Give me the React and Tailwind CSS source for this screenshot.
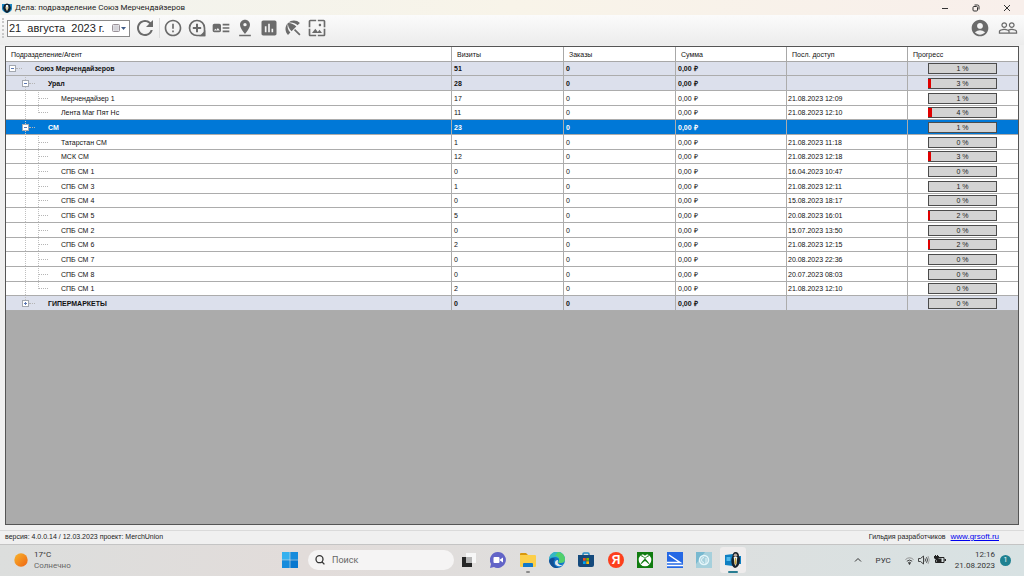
import { useState } from 'react';
import {
  MdAccountCircle,
  MdArtTrack,
  MdAssessment,
  MdBeachAccess,
  MdErrorOutline,
  MdPeopleOutline,
  MdPinDrop,
  MdRefresh,
  MdWallpaper,
} from 'react-icons/md';

const rows = [
  { level: 0, name: 'Союз Мерчендайзеров', visits: 51, date: '', progress: 1 },
  { level: 1, name: 'Урал', visits: 28, date: '', progress: 3 },
  { level: 2, name: 'Мерчендайзер 1', visits: 17, date: '21.08.2023 12:09', progress: 1 },
  { level: 2, name: 'Лента Маг Пят Нс', visits: 11, date: '21.08.2023 12:10', progress: 4, last: true },
  { level: 1, name: 'СМ', visits: 23, date: '', progress: 1 },
  { level: 2, name: 'Татарстан СМ', visits: 1, date: '21.08.2023 11:18', progress: 0 },
  { level: 2, name: 'МСК СМ', visits: 12, date: '21.08.2023 12:18', progress: 3 },
  { level: 2, name: 'СПБ СМ 1', visits: 0, date: '16.04.2023 10:47', progress: 0 },
  { level: 2, name: 'СПБ СМ 3', visits: 1, date: '21.08.2023 12:11', progress: 1 },
  { level: 2, name: 'СПБ СМ 4', visits: 0, date: '15.08.2023 18:17', progress: 0 },
  { level: 2, name: 'СПБ СМ 5', visits: 5, date: '20.08.2023 16:01', progress: 2 },
  { level: 2, name: 'СПБ СМ 2', visits: 0, date: '15.07.2023 13:50', progress: 0 },
  { level: 2, name: 'СПБ СМ 6', visits: 2, date: '21.08.2023 12:15', progress: 2 },
  { level: 2, name: 'СПБ СМ 7', visits: 0, date: '20.08.2023 22:36', progress: 0 },
  { level: 2, name: 'СПБ СМ 8', visits: 0, date: '20.07.2023 08:03', progress: 0 },
  { level: 2, name: 'СПБ СМ 1', visits: 2, date: '21.08.2023 12:10', progress: 0, last: true },
  { level: 1, name: 'ГИПЕРМАРКЕТЫ', visits: 0, date: '', progress: 0, closed: true, last: true },
];

function ShieldLogo() {
  return (
    <svg viewBox="0 0 10 10" className="size-[10px]" aria-hidden="true">
      <path d="M0 1h10v5q-1 3-5 4-4-1-5-4z" fill="#1b87c4" />
      <path d="M2 2q3-3 6 0l1 3q-1 4-4 5-3-1-4-5z" fill="#10222f" />
      <path d="M4 2h2l.5 3L5 8 3.500 5z" fill="#f1f1ec" />
      <path d="M4.600 4h.8v3h-.8z" fill="#c9a538" />
    </svg>
  );
}

function AgentLogo() {
  return (
    <svg viewBox="0 0 16 16" className="size-4" aria-hidden="true">
      <path d="M0 3l8-1v12l-8-1z" fill="#0f7fc2" />
      <path d="M1.500 5h4v4h-4z" fill="#4fb9ec" />
      <path d="M13 4h3v8h-3z" fill="#0f7fc2" />
      <path d="M10.500 0c2.500 0 3.500 2 3.500 4l1 2c0 5-1 9-5 10-3-1-4-5-3.500-9L7.500 4c0-2 1-4 3-4z" fill="#18222b" />
      <path d="M8.700 5h3.600l-.8 7-1 2-1-2z" fill="#eef3f5" />
      <path d="M10 6h1l.5 5-1 2-1-2z" fill="#c9a538" />
      <circle cx="10.500" cy="3.200" r="1.700" fill="#b9aaa0" />
    </svg>
  );
}

function TitleBar() {
  return (
    <header className="flex h-[15px] items-center bg-linear-to-r from-[#f1f3ee] via-[#f8f4e9] to-[#f8efeb] pr-px pl-[2px] font-['Roboto',sans-serif]">
      <ShieldLogo />
      <h1 className="ml-[3px] flex-1 text-[8px] leading-[12px] text-[#222]">
        Дела: подразделение Союз Мерчендайзеров
      </h1>
      <div className="flex text-[#333]">
        <button aria-label="Свернуть" className="flex h-[15px] w-[31px] items-center justify-center">
          <svg viewBox="0 0 8 8" className="size-2" fill="none" stroke="currentColor">
            <path d="M1 4.500h6" />
          </svg>
        </button>
        <button aria-label="Восстановить" className="flex h-[15px] w-[31px] items-center justify-center">
          <svg viewBox="0 0 8 8" className="size-2" fill="none" stroke="currentColor">
            <rect x="1" y="2.500" width="4.500" height="4.500" rx="1" />
            <path d="M2.500 1h3A1.500 1.500 0 0 1 7 2.500v3" />
          </svg>
        </button>
        <button aria-label="Закрыть" className="flex h-[15px] w-[32px] items-center justify-center">
          <svg viewBox="0 0 8 8" className="size-2" fill="none" stroke="currentColor">
            <path d="M1 1l6 6M7 1L1 7" />
          </svg>
        </button>
      </div>
    </header>
  );
}

function AddBubble() {
  return (
    <svg viewBox="0 0 24 24" className="size-5" fill="none" stroke="currentColor" strokeWidth="2">
      <path d="M12 3a9 9 0 1 0 0 18h9v-9a9 9 0 0 0-9-9z" />
      <path d="M12 7v10M7 12h10" strokeWidth="2.400" />
      <path d="M17 21l4-4v4z" fill="currentColor" />
    </svg>
  );
}

const tools = [
  { label: 'Задачи', icon: <MdErrorOutline className="size-5" /> },
  { label: 'Добавить', icon: <AddBubble /> },
  { label: 'Фотоотчёт', icon: <MdArtTrack className="size-5" /> },
  { label: 'На карте', icon: <MdPinDrop className="size-5" /> },
  { label: 'Отчёты', icon: <MdAssessment className="size-5" /> },
  { label: 'Отпуск', icon: <MdBeachAccess className="size-5" /> },
  { label: 'Галерея', icon: <MdWallpaper className="size-5" /> },
];

function Toolbar() {
  const [date, setDate] = useState('21  августа  2023 г.');

  return (
    <div className="flex h-[30px] items-center bg-linear-to-b from-[#fbfbfb] to-[#ececec] pb-1 text-[#6b6b6b]">
      <span className="ml-[2px] h-5 border-l-2 border-dotted border-[#c8c8c8]" />
      <div className="ml-[3px] flex h-[17px] w-[123px] items-center border border-[#8a8a8a] bg-white pl-px">
        <input
          aria-label="Дата"
          value={date}
          onChange={(e) => setDate(e.target.value)}
          className="min-w-0 flex-1 bg-transparent text-[11px] leading-[14px] whitespace-pre text-[#222] outline-none"
        />
        <button aria-label="Открыть календарь" className="mr-[3px] flex items-center gap-px">
          <svg viewBox="0 0 8 8" className="size-2">
            <rect x=".5" y=".5" width="7" height="7" rx="1" fill="#e6e6ea" stroke="#9a9298" />
            <path d="M1 3h6M1 5h6M3 1v6M5 1v6" stroke="#bdb9c2" strokeWidth=".5" />
          </svg>
          <svg viewBox="0 0 5 3" className="h-[3px] w-[5px]">
            <path d="M0 0h5L2.500 3z" fill="#3d5a86" />
          </svg>
        </button>
      </div>
      <button aria-label="Обновить" className="ml-[3px]">
        <MdRefresh className="size-6" />
      </button>
      <span className="ml-[2px] h-5 border-l border-[#dcdcdc]" />
      <div className="ml-[3px] flex flex-1 gap-1">
        {tools.map((t) => (
          <button key={t.label} aria-label={t.label}>
            {t.icon}
          </button>
        ))}
      </div>
      <div className="mr-[6px] flex gap-2">
        <button aria-label="Профиль">
          <MdAccountCircle className="size-5" />
        </button>
        <button aria-label="Команда">
          <MdPeopleOutline className="size-5" />
        </button>
      </div>
    </div>
  );
}

function Toggle({ closed, root, last }) {
  return (
    <span className="ml-[3px] flex w-[7px] flex-col items-center">
      <span className={root ? 'flex-1' : 'flex-1 border-l border-dotted border-[#c0c0c0]'} />
      <button aria-label={closed ? 'Развернуть' : 'Свернуть ветку'} className="size-[7px]">
        <svg viewBox="0 0 7 7" className="block size-[7px]">
          <rect x=".5" y=".5" width="6" height="6" fill="#fff" stroke="#a3a8b0" />
          <path d={closed ? 'M2 3.500h3M3.500 2v3' : 'M2 3.500h3'} stroke="#5c78b4" />
        </svg>
      </button>
      <span className={root || last ? 'flex-1' : 'flex-1 border-l border-dotted border-[#c0c0c0]'} />
    </span>
  );
}

function NameCell({ row }) {
  return (
    <div className="flex h-[13px] items-stretch">
      {row.level > 0 && <span className="w-[13px]" />}
      {row.level < 2 ? (
        <>
          <Toggle closed={row.closed} root={row.level === 0} last={row.last} />
          <span className="w-[6px] self-center border-t border-dotted border-[#b5b5b5]" />
        </>
      ) : (
        <>
          <span className="ml-[6px] w-[7px] border-l border-dotted border-[#c0c0c0]" />
          <span
            className={
              row.last
                ? 'ml-[6px] h-[7px] border-l border-dotted border-[#c0c0c0]'
                : 'ml-[6px] border-l border-dotted border-[#c0c0c0]'
            }
          />
          <span className="w-[9px] self-center border-t border-dotted border-[#b5b5b5]" />
        </>
      )}
      <span className="ml-[13px] leading-[13px]">{row.name}</span>
    </div>
  );
}

function ProgressBar({ value }) {
  return (
    <div
      role="progressbar"
      aria-valuenow={value}
      aria-label="Прогресс"
      className="relative ml-[20px] h-[11px] w-[69px] border border-[#4c4c4c] bg-[#d3d3d3] text-center leading-[9px] font-normal text-[#222]"
    >
      {value > 1 && (
        <span
          className="absolute inset-y-0 -left-px bg-[#e00000]"
          style={{ width: value }}
        />
      )}
      {value} %
    </div>
  );
}

function AgentTable() {
  const [selected, setSelected] = useState(4);

  return (
    <table className="w-full table-fixed border-separate border-spacing-0 text-left text-[7px] leading-[13px] text-[#111]">
      <colgroup>
        <col />
        <col className="w-[112px]" />
        <col className="w-[112px]" />
        <col className="w-[111px]" />
        <col className="w-[121px]" />
        <col className="w-[111px]" />
      </colgroup>
      <thead>
        <tr className="h-[15px] bg-white *:border-b *:border-[#a8a8a8] *:p-0 *:pl-[5px] *:font-normal">
          <th>Подразделение/Агент</th>
          <th className="border-l border-l-[#e2e2e2]">Визиты</th>
          <th className="border-l border-l-[#e2e2e2]">Заказы</th>
          <th className="border-l border-l-[#e2e2e2]">Сумма</th>
          <th className="border-l border-l-[#e2e2e2]">Посл. доступ</th>
          <th className="border-l border-l-[#e2e2e2]">Прогресс</th>
        </tr>
      </thead>
      <tbody>
        {rows.map((row, i) => {
          let tone = 'bg-white';
          if (row.level < 2) tone = 'bg-[#dce0ec] font-bold';
          if (i === selected) tone = 'bg-[#0078d7] text-white' + (row.level < 2 ? ' font-bold' : '');

          return (
            <tr
              key={i}
              onClick={() => setSelected(i)}
              className={`h-[15px] nth-[3n+1]:h-[14px] *:border-b *:border-[#acacac] *:p-0 ${tone}`}
            >
              <td>
                <NameCell row={row} />
              </td>
              <td className="border-l pl-[2px]!">{row.visits}</td>
              <td className="border-l pl-[2px]!">0</td>
              <td className="border-l pl-[2px]!">0,00 ₽</td>
              <td className="border-l pl-px!">{row.date}</td>
              <td className="border-l">
                <ProgressBar value={row.progress} />
              </td>
            </tr>
          );
        })}
      </tbody>
    </table>
  );
}

function StatusBar() {
  return (
    <footer className="flex h-[14px] items-center border-t border-[#dadada] bg-[#f0f0f0] pr-[25px] pb-px pl-[5px] text-[7px] leading-[12px] text-[#222]">
      <p className="flex-1">версия: 4.0.0.14 / 12.03.2023 проект: MerchUnion</p>
      <p>Гильдия разработчиков</p>
      <a href="#grsoft" className="ml-[5px] text-[8px] text-[#0000ee] underline">
        www.grsoft.ru
      </a>
    </footer>
  );
}

const apps = [
  {
    label: 'Представление задач',
    art: (
      <>
        <path d="M1 5h10v10H1z" fill="#262626" />
        <path d="M5 1h10v10H5z" fill="#f7f7f7" />
        <path d="M5 5h6v6H5z" fill="#b5b5b5" />
      </>
    ),
  },
  {
    label: 'Чат',
    art: (
      <>
        <path d="M8 0a8 8 0 1 1-4 15l-4 1 1-4A8 8 0 0 1 8 0z" fill="#6264c7" />
        <rect x="3.500" y="5" width="6" height="6" rx="1" fill="#fff" />
        <path d="M10 7.500l3-2v5l-3-2z" fill="#fff" />
      </>
    ),
  },
  {
    label: 'Проводник',
    mark: 'bg-[#8a8a8a] w-1',
    art: (
      <>
        <path d="M0 2q0-1 1-1h5l2 2h-8z" fill="#d9980d" />
        <path d="M0 3h15q1 0 1 1v10q0 1-1 1H1q-1 0-1-1z" fill="#fccf49" />
        <path d="M3 15v-3q0-1 1-1h8q1 0 1 1v3z" fill="#1378c9" />
      </>
    ),
  },
  {
    label: 'Edge',
    art: (
      <>
        <circle cx="8" cy="8" r="8" fill="#1377c9" />
        <path d="M0 8a8 8 0 0 1 16-1c0 3-2 4-5 4-2 0-2-1-1-2 1-2-1-4-4-4S1 6 0 8z" fill="#35b8c4" />
        <path d="M9 .1A8 8 0 0 1 16 7c0 3-2 4-5 4-2 0-2-1-1-2 1-3-1-5-4-5z" fill="#52d06b" />
        <path d="M9 9c-1 2 1 4 3 4 1.500 0 2.500-.4 3-1-2 3-9 3-9-1 0-2 1-3 3-3z" fill="#e1e7ea" />
        <path d="M6 7c-3 3-1 8 4 9-5 1-9-2-10-7 1-3 4-4 6-2z" fill="#124f94" />
      </>
    ),
  },
  {
    label: 'Microsoft Store',
    art: (
      <>
        <path d="M5 4V2q0-1 1-1h4q1 0 1 1v2" fill="none" stroke="#248dc8" strokeWidth="1.500" />
        <path d="M0 3h16v10q0 2-2 2H2q-2 0-2-2z" fill="#154a7c" />
        <path d="M5 6h2.700v2.700H5z" fill="#f25022" />
        <path d="M8.300 6H11v2.700H8.300z" fill="#7fba00" />
        <path d="M5 9.300h2.700V12H5z" fill="#00a4ef" />
        <path d="M8.300 9.300H11V12H8.300z" fill="#ffb900" />
      </>
    ),
  },
  {
    label: 'Яндекс',
    art: (
      <>
        <circle cx="8" cy="8" r="8" fill="#fc3f1d" />
        <text x="8" y="12" textAnchor="middle" fontSize="12" fontWeight="bold" fill="#fff">
          Я
        </text>
      </>
    ),
  },
  {
    label: 'Xbox',
    art: (
      <>
        <path d="M0 0h16v16H0z" fill="#107c10" />
        <circle cx="8" cy="8" r="6.300" fill="#fff" />
        <path d="M4 2C6 1.500 7 3 8 3.800 9 3 10 1.500 12 2 10 .5 6 .5 4 2z" fill="#107c10" />
        <path d="M3 13.500C3.500 11 6 8 8 6.500c2 1.500 4.500 4.500 5 7-1.500-2-3.500-3.500-5-4.500-1.500 1-3.500 2.500-5 4.500z" fill="#107c10" />
        <path d="M3.500 3.500Q6.500 4 8 6.500 9.500 4 12.500 3.500" fill="none" stroke="#107c10" />
      </>
    ),
  },
  {
    label: 'Сканер',
    art: (
      <>
        <path d="M0 0h16v16H0z" fill="#2468e5" />
        <path d="M2 3l11 7.500H0M0 13.500h16" fill="none" stroke="#fff" strokeWidth="1.500" />
      </>
    ),
  },
  {
    label: 'Почта',
    art: (
      <>
        <path d="M0 0h16v16H0z" fill="#a6d0dc" />
        <path d="M0 0h9L0 12z" fill="#78b9d0" />
        <circle cx="8" cy="8" r="4.500" fill="none" stroke="#e5f6fa" strokeWidth="1.500" />
        <path d="M8 5.500a2.500 2.500 0 1 0 0 5M10 6v6" fill="none" stroke="#e5f6fa" />
      </>
    ),
  },
];

function Taskbar() {
  return (
    <nav className="grid h-8 grid-cols-[1fr_auto_1fr] items-center border-t border-[#c4c4c4] bg-linear-to-r from-[#dcdedd] via-[#e2dcda] via-30% to-[#d8e2e3] pb-px pl-[6px] font-['Roboto',sans-serif] text-[8px] leading-[11px] text-[#333]">
      <div className="flex items-center gap-[6px] pl-[8px]">
        <svg viewBox="0 0 14 14" className="size-[14px]">
          <defs>
            <linearGradient id="sun" x1="0" y1="0" x2="1" y2="1">
              <stop offset="0" stopColor="#f8b52c" />
              <stop offset="1" stopColor="#ee6413" />
            </linearGradient>
          </defs>
          <circle cx="7" cy="7" r="6.700" fill="url(#sun)" />
        </svg>
        <div>
          <p>17°C</p>
          <p className="text-[#666]">Солнечно</p>
        </div>
      </div>

      <div className="flex items-center">
        <button aria-label="Пуск">
          <svg viewBox="0 0 16 16" className="size-4" fill="#168bdc">
            <path d="M0 0h7.700v7.700H0z" fill="#35b1ef" />
            <path d="M8.300 0H16v7.700H8.300zM0 8.300h7.700V16H0z" />
            <path d="M8.300 8.300H16V16H8.300z" fill="#0877cf" />
          </svg>
        </button>
        <label className="ml-[10px] flex h-5 w-[146px] items-center gap-[7px] rounded-full bg-[#f5f4f4] pl-[7px]">
          <svg viewBox="0 0 10 10" className="size-[10px]" fill="none" stroke="#333" strokeWidth="1.300">
            <circle cx="4.500" cy="4.200" r="3.500" />
            <path d="M6.900 6.800l2.500 2.600" />
          </svg>
          <input
            type="text"
            aria-label="Поиск"
            placeholder="Поиск"
            className="min-w-0 flex-1 bg-transparent text-[9px] leading-[12px] outline-none placeholder:text-[#666]"
          />
        </label>
        <div className="flex w-[294px]">
          {apps.map((app) => (
            <button key={app.label} aria-label={app.label} className="relative flex h-[26px] flex-1 items-center justify-center">
              <svg viewBox="0 0 16 16" className="size-4 font-['Liberation_Sans',sans-serif]">
                {app.art}
              </svg>
              {app.mark && <span className={`absolute bottom-0 h-[2px] rounded-full ${app.mark}`} />}
            </button>
          ))}
          <button aria-label="Дела" className="relative flex flex-1 items-center justify-center">
            <span className="flex size-[26px] items-center justify-center rounded-[3px] bg-[#eeecec]">
              <AgentLogo />
            </span>
            <span className="absolute bottom-0 h-[2px] w-[10px] rounded-full bg-[#287d92]" />
          </button>
        </div>
      </div>

      <div className="flex items-center justify-end pr-[13px]">
        <button aria-label="Скрытые значки">
          <svg viewBox="0 0 8 8" className="size-2" fill="none" stroke="#333">
            <path d="M1 5.500l3-3 3 3" />
          </svg>
        </button>
        <button className="ml-[14px]">РУС</button>
        <div className="ml-[14px] flex items-center gap-1">
          <svg viewBox="0 0 10 10" className="size-[9px]" fill="none" stroke="#333">
            <path d="M.5 4q4.500-4 9 0" stroke="#888" />
            <path d="M2 5.800q3-2.600 6 0M3.500 7.500q1.500-1.200 3 0" />
            <circle cx="5" cy="8.500" r=".7" fill="#333" />
          </svg>
          <svg viewBox="0 0 12 10" className="h-[10px] w-3" fill="none" stroke="#333" strokeWidth=".9">
            <path d="M.5 3.500h2L5.500 1v8L2.500 6.500h-2z" />
            <path d="M7 3.500q1 1.500 0 3M8.500 2.200q2 2.800 0 5.600" />
            <path d="M10 1q2.500 4 0 8" stroke="#999" />
          </svg>
          <svg viewBox="0 0 12 10" className="h-[10px] w-3">
            <path d="M3 2.500h7v5H1.500V5" fill="none" stroke="#222" />
            <path d="M2.500 3.500h5v3.500h-5zM10.500 4H12v2h-1.500z" fill="#222" />
            <path d="M0 1h1V0h1v1h1V0h1v1h1v2L3 5H2L0 3z" fill="#222" />
          </svg>
        </div>
        <div className="ml-[9px] text-right">
          <p>12:16</p>
          <p>21.08.2023</p>
        </div>
        <span className="ml-[5px] size-[11px] rounded-full bg-[#1e8191] text-center text-[7px] leading-[11px] text-white">
          1
        </span>
      </div>
    </nav>
  );
}

export default function App() {
  return (
    <div className="flex min-h-screen flex-col bg-[#f0f0f0] font-['Liberation_Sans',Arial,sans-serif]">
      <TitleBar />
      <Toolbar />
      <main className="mx-[5px] mt-px mb-[5px] flex-1 border border-[#555] bg-[#ababab]">
        <AgentTable />
      </main>
      <StatusBar />
      <Taskbar />
    </div>
  );
}
